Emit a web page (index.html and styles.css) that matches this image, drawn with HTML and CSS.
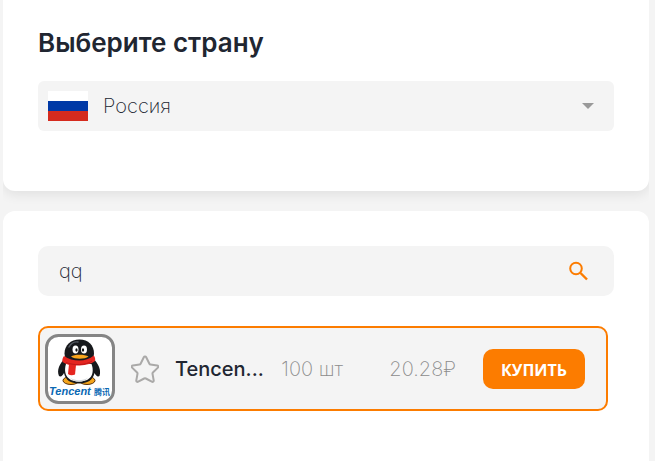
FILE: index.html
```html
<!DOCTYPE html>
<html lang="ru">
<head>
  <meta charset="UTF-8">
  <meta name="viewport" content="width=device-width, initial-scale=1">
  <title>Выберите страну</title>
  <link rel="stylesheet" href="styles.css">
</head>
<body>
  <main class="page">
    <section class="card card-country">
      <h2 class="title"><label for="country">Выберите страну</label></h2>
      <div class="field">
        <svg class="flag" viewBox="0 0 40 30" aria-hidden="true">
          <rect width="40" height="10" fill="#fff"/>
          <rect y="10" width="40" height="10" fill="#0039a6"/>
          <rect y="20" width="40" height="10" fill="#d52b1e"/>
        </svg>
        <select id="country" class="control country-select">
          <option>Россия</option>
        </select>
        <svg class="arrow" viewBox="0 0 12 6" aria-hidden="true">
          <path d="M0 0h12L6 6z" fill="#999"/>
        </svg>
      </div>
    </section>

    <section class="card card-services">
      <form class="field search">
        <input type="text" class="control search-input" value="qq" aria-label="qq">
        <button type="button" class="search-btn">
          <svg viewBox="0 0 20 20" width="20" height="20" aria-hidden="true">
            <circle cx="8" cy="7.500" r="5.800" fill="none" stroke="#fc7c00" stroke-width="2"/>
            <path d="M12.500 12l6.500 6.500" stroke="#fc7c00" stroke-width="2.400"/>
          </svg>
        </button>
      </form>

      <div class="service">
        <svg class="logo" viewBox="0 0 70 70" aria-hidden="true">
          <rect x="1.5" y="1.5" width="67" height="67" rx="12" fill="#fff" stroke="#858585" stroke-width="3"/>
          <!-- feet -->
          <ellipse cx="26" cy="46.500" rx="8" ry="4" fill="#f5a51b" stroke="#5b3209" stroke-width="1"/>
          <ellipse cx="42" cy="46.500" rx="8" ry="4" fill="#f5a51b" stroke="#5b3209" stroke-width="1"/>
          <!-- body -->
          <path d="M20 24C14.500 30 11.500 36 14 42c2 1.500 4-1 5-3 1.500 7 6.500 10.500 15 10.500S48 46 49.500 39c1 2 3 4.500 5 3 2-6-1-12-6.500-18z" fill="#17191c"/>
          <path d="M21 30c-2.500 8-.5 17.500 13 17.500S49.500 38 46.500 30z" fill="#fff"/>
          <path d="M25 43.500c5 3.500 13 3.500 18 0-2 3-5.500 4.300-9 4.300s-7-1.300-9-4.300z" fill="#d5d9dc"/>
          <!-- head -->
          <path d="M34.500 5.500c-9 0-15 6-15 14 0 6 6 10.500 15 10.500s14.500-4.500 14.500-10.500c0-8-5.500-14-14.500-14z" fill="#17191c"/>
          <path d="M24 13c2-4 6-5.500 9-5" fill="none" stroke="#555b63" stroke-width="1.500" stroke-linecap="round"/>
          <ellipse cx="30.500" cy="15.500" rx="3" ry="4" fill="#fff"/>
          <ellipse cx="39" cy="15.500" rx="3" ry="4" fill="#fff"/>
          <ellipse cx="31.500" cy="16" rx="1.100" ry="1.800" fill="#111"/>
          <ellipse cx="38" cy="16" rx="1.100" ry="1.800" fill="#111"/>
          <path d="M26 22.500c3-2.500 14-2.500 17.500 0-3.500 3-14 3-17.500 0z" fill="#f8a51c"/>
          <!-- scarf -->
          <path d="M19 22c-1.500 2-2 4-1.500 6 4 3 9 3.500 15 3.500s13-1 17.500-4.500c.5-2 0-4-1.200-5.500-4 3.500-9 5-14.500 5s-11-1.500-15.300-4.500z" fill="#e52520"/>
          <path d="M24 30l-1 10c2 1.500 4.500 1.500 7 .5l1-9.500z" fill="#e52520"/>
          <path d="M21 28.500c7 3 20 3 26-1.500" fill="none" stroke="#a91217" stroke-width=".7"/>
          <text x="4" y="61" class="logo-latin">Tencent</text>
          <text x="49" y="61" class="logo-cjk">腾讯</text>
        </svg>
        <button type="button" class="star-btn">
          <svg viewBox="0 0 28 28" width="28" height="28" aria-hidden="true">
            <path d="M12.800 2.200c.5-1 1.900-1 2.400 0l3.200 6.500c.2.400.6.700 1 .7l6.800 1c1.200.2 1.500 1.400.7 2.200l-5 4.900c-.3.300-.5.800-.4 1.200l1.200 6.700c.2 1.100-.9 1.800-1.900 1.300l-6-3.200c-.5-.2-1.100-.2-1.600 0l-6 3.200c-1 .5-2.100-.2-1.900-1.300l1.200-6.700c.1-.4-.1-.9-.4-1.200l-5-4.900c-.8-.8-.5-2 .7-2.200l6.800-1c.4 0 .8-.3 1-.7z" fill="none" stroke="#aaa9a8" stroke-width="2" stroke-linejoin="round"/>
          </svg>
        </button>
        <span class="name">Tencen...</span>
        <span class="count">100 шт</span>
        <span class="price">20.28₽</span>
        <button type="button" class="buy-btn">КУПИТЬ</button>
      </div>
    </section>
  </main>
</body>
</html>
```
FILE: styles.css
```css
* {
  box-sizing: border-box;
}

body {
  margin: 0;
  background: #f4f4f4;
  color: #212631;
  font-family: Inter, "Noto Sans", sans-serif;
  font-size: 20px;
  font-weight: 250;
}

button {
  border: none;
  padding: 0;
  background: none;
  cursor: pointer;
}

svg {
  display: block;
}

.page {
  display: flex;
  flex-direction: column;
  gap: 20px;
  min-height: 100vh;
  margin: 0 6px 0 3px;
  overflow: hidden;
}

.card {
  background: #fff;
  padding: 35px;
}

.card-country {
  padding-top: 28px;
  padding-bottom: 60px;
  border-radius: 0 0 12px 12px;
  box-shadow: 0 4px 12px rgba(0, 0, 0, 0.08);
}

.card-services {
  flex: 1;
  border-radius: 12px 12px 0 0;
}

.title {
  margin: 0 0 23px;
  font-size: 26px;
  line-height: 30px;
  font-weight: 600;
}

/* icons share the grid cell with the control */
.field {
  display: grid;
  align-items: center;
}

.field > * {
  grid-area: 1 / 1;
}

.control {
  width: 100%;
  height: 50px;
  border: none;
  border-radius: 6px;
  outline: none;
  background: #f4f4f4;
  color: inherit;
  font: inherit;
}

.country-select {
  appearance: none;
  padding: 0 40px 0 65px;
}

.flag {
  width: 40px;
  height: 30px;
  margin-left: 10px;
  z-index: 1;
}

.arrow {
  width: 12px;
  height: 6px;
  margin-right: 20px;
  justify-self: end;
  z-index: 1;
  pointer-events: none;
}

.search {
  margin-bottom: 30px;
}

.search-input {
  padding: 0 60px 0 21px;
  border-radius: 10px;
}

.search-btn {
  justify-self: end;
  margin-right: 26px;
}

.service {
  display: flex;
  align-items: center;
  height: 85px;
  margin-right: 6px;
  padding: 0 21px 0 5px;
  border: 2px solid #fc7c00;
  border-radius: 10px;
  background: #f4f4f4;
}

.logo {
  flex: none;
  width: 70px;
  height: 70px;
  margin-right: 16px;
}

.logo-latin {
  font: italic bold 11px "Liberation Sans", sans-serif;
  fill: #0b68b3;
}

.logo-cjk {
  font: bold 8px "Noto Sans CJK SC", sans-serif;
  fill: #0b68b3;
}

.star-btn {
  margin-right: 16px;
}

.name {
  flex: 1;
  font-weight: 500;
  white-space: nowrap;
}

.count,
.price {
  color: #8c8c8c;
  white-space: nowrap;
}

.count {
  width: 70px;
  margin-right: 38px;
}

.price {
  margin-right: 27px;
}

.buy-btn {
  width: 102px;
  height: 40px;
  padding-top: 2px;
  border-radius: 10px;
  background: #fc7c00;
  color: #fff;
  font: bold 16px "Open Sans", sans-serif;
}
```
